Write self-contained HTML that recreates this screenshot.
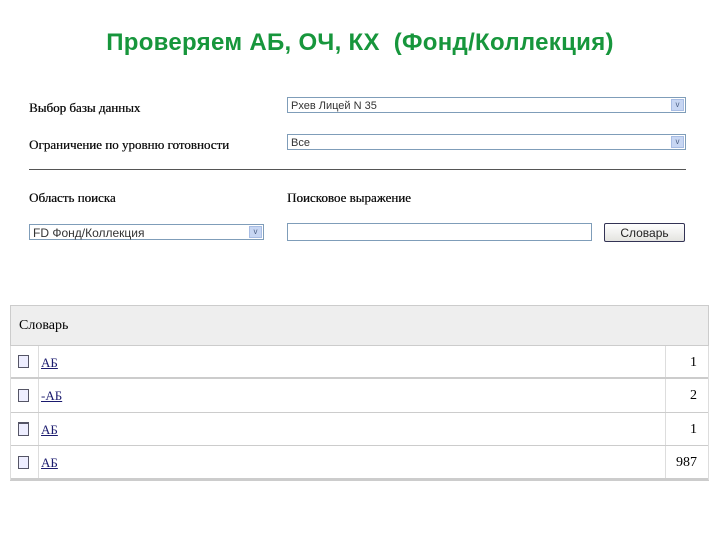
<!DOCTYPE html>
<html><head><meta charset="utf-8"><style>
body{margin:0;width:720px;height:540px;background:#fff;position:relative;font-family:"Liberation Serif",serif;overflow:hidden}
.a{position:absolute}
.t{left:0;width:720px;top:29px;text-align:center;color:#17963c;font:bold 24px "Liberation Sans",sans-serif;letter-spacing:0.3px}
.lbl{font-size:13px;color:#111;text-shadow:0.3px 0 0 #111}
.sel{border:1px solid #7f9db9;height:16px;background:#fff;font:11px "Liberation Sans",sans-serif;color:#333;line-height:16px;padding-left:3px;box-sizing:border-box}
.sel i{position:absolute;right:1px;top:1px;width:13px;height:12px;background:#c7d6f3;border:1px solid #a8bde4;box-sizing:border-box;font-style:normal;font-size:8px;line-height:10px;text-align:center;color:#4d6185}
.row{left:10px;width:699px;border-bottom:2px solid #ccc;box-sizing:border-box;font-size:14px}
.cb{position:absolute;left:8px;width:9px;height:11px;border:1px solid #556;background:#eef}
.d1{position:absolute;left:28px;top:0;bottom:0;border-left:1px solid #ddd}
.d2{position:absolute;left:655px;top:0;bottom:0;border-left:1px solid #ddd}
.w{position:absolute;left:31px;color:#1a1a6e;text-decoration:underline;font-size:13px}
.n{position:absolute;right:12px;font-size:14px}
</style></head><body>
<div class="a t">Проверяем АБ, ОЧ, КХ&nbsp; (Фонд/Коллекция)</div>
<div class="a lbl" style="left:29px;top:100px">Выбор базы данных</div>
<div class="a lbl" style="left:29px;top:137px">Ограничение по уровню готовности</div>
<div class="a sel" style="left:287px;top:97px;width:399px">Рхев Лицей N 35<i>v</i></div>
<div class="a sel" style="left:287px;top:134px;width:399px">Все<i>v</i></div>
<div class="a" style="left:29px;top:169px;width:657px;border-top:1px solid #555"></div>
<div class="a lbl" style="left:29px;top:190px">Область поиска</div>
<div class="a lbl" style="left:287px;top:190px">Поисковое выражение</div>
<div class="a sel" style="left:29px;top:224px;width:235px;font-size:12px">FD Фонд/Коллекция<i>v</i></div>
<div class="a sel" style="left:287px;top:223px;width:305px;height:18px"></div>
<div class="a" style="left:604px;top:223px;width:81px;height:19px;border:1px solid #335;border-radius:2px;background:linear-gradient(#fff,#e4e4e0);font:12px 'Liberation Sans',sans-serif;text-align:center;line-height:18px;box-sizing:border-box;color:#222">Словарь</div>
<div class="a" style="left:10px;top:305px;width:699px;height:41px;background:#eee;border:1px solid #ccc;box-sizing:border-box"><span style="position:absolute;left:8px;top:12px;font-size:14px">Словарь</span></div>
<div class="a row" style="top:346px;height:33px"><div class="d1"></div><div class="d2"></div><div class="cb" style="top:9px"></div><span class="w" style="top:9px">АБ</span><span class="n" style="top:9px">1</span></div>
<div class="a row" style="top:379px;height:34px;border-bottom-width:1px"><div class="d1"></div><div class="d2"></div><div class="cb" style="top:10px"></div><span class="w" style="top:9px">-АБ</span><span class="n" style="top:9px">2</span></div>
<div class="a row" style="top:413px;height:33px;border-bottom-width:1px"><div class="d1"></div><div class="d2"></div><div class="cb" style="top:9px;border-top-width:2px"></div><span class="w" style="top:9px">АБ</span><span class="n" style="top:9px">1</span></div>
<div class="a row" style="top:446px;height:35px;border-bottom-width:3px"><div class="d1"></div><div class="d2"></div><div class="cb" style="top:10px"></div><span class="w" style="top:9px">АБ</span><span class="n" style="top:9px">987</span></div>
<div class="a" style="left:10px;top:346px;height:134px;border-left:1px solid #ddd"></div>
<div class="a" style="left:708px;top:346px;height:134px;border-left:1px solid #ddd"></div>
</body></html>
